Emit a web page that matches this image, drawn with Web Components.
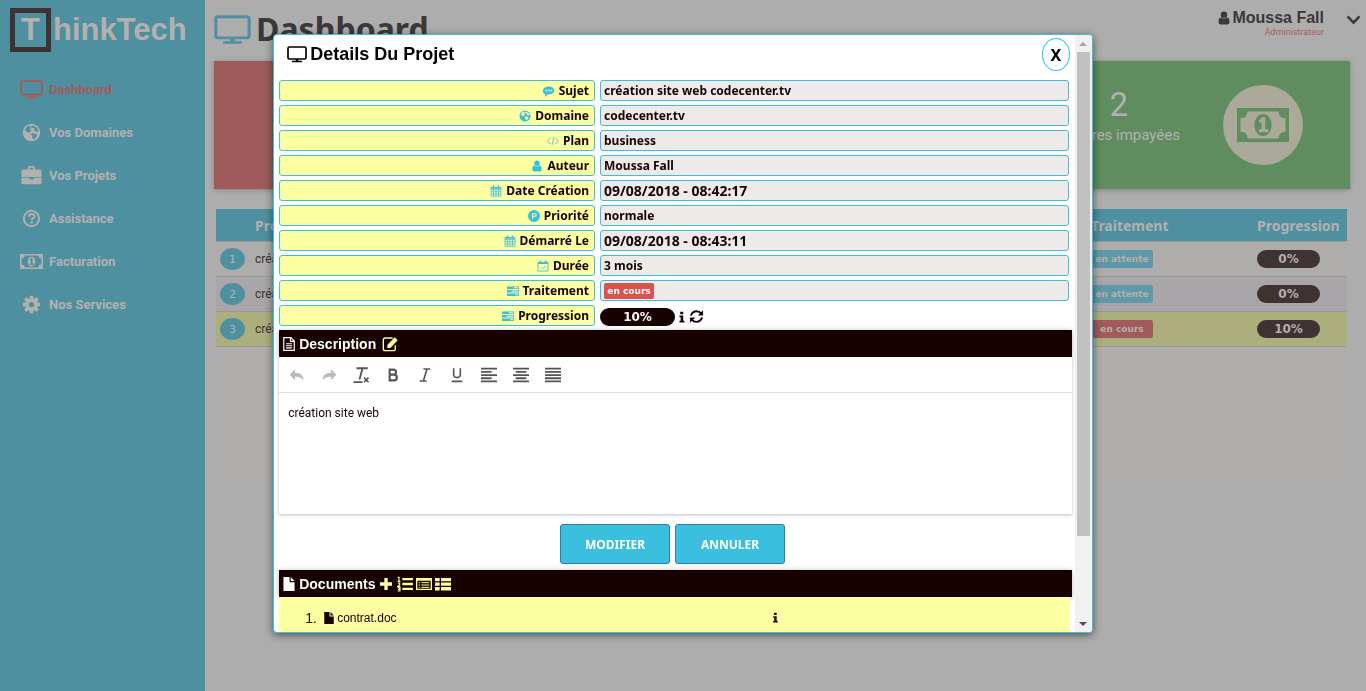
<!DOCTYPE html>
<html lang="fr">
<head>
<meta charset="utf-8">
<title>ThinkTech - Dashboard</title>
<style>
html, body { margin: 0; min-height: 100%; background: #adadad; }
body { font-family: Roboto, sans-serif; color: #180101; }
</style>
</head>
<body>
<tt-app></tt-app>
<script>
const ICONS = {
  desktop: '<rect x="1.200" y="1.200" width="21.600" height="14.800" rx="1.500" fill="none" stroke="currentColor" stroke-width="2"/><path d="M10.500 16h3v2.300h4q.8 0 .8.900t-.8.900h-11q-.8 0-.8-.900t.8-.900h4z"/>',
  globe: '<path fill-rule="evenodd" d="M12 1a11 11 0 1 0 0 22a11 11 0 0 0 0-22zM14 3l5 3 2 4-3 1-3-2 1-2-2-1-2 1-1-2zM6 5l3-2 2 2-1 3 2 1-3 3-2 0-2-2-1-2zM13 13l5 1 1 2-4 5-2-2 0-3-2-2z"/>',
  briefcase: '<path fill-rule="evenodd" d="M8 5V3q0-2 2-2h4q2 0 2 2v2h5q2 0 2 2v6H1V7q0-2 2-2zM10 3v2h4V3zM1 14h8.500v1.500h5V14H23V19q0 2-2 2H3q-2 0-2-2z"/>',
  help: '<circle cx="12" cy="12" r="9.700" fill="none" stroke="currentColor" stroke-width="2.400"/><path d="M8.500 9.500q.5-3.300 3.700-3.300 3.500 0 3.500 3 0 1.700-1.800 2.600-1.700.8-1.700 2" fill="none" stroke="currentColor" stroke-width="2.600"/><path d="M10.800 15.500h2.800v2.700h-2.800z"/>',
  money: '<path fill-rule="evenodd" d="M0 0H30V20H0zM2 2V18H28V2zM6 3H24Q24 6 27 6V14Q24 14 24 17H6Q6 14 3 14V6Q6 6 6 3zM15 4C8.500 4 8.500 16 15 16S21.500 4 15 4z"/><path d="M12.500 8l2-2h1.800V12.500H18V14H12.500V12.500h1.700V8.500l-1 .6z"/>',
  moneyInverse: '<path fill-rule="evenodd" d="M0 0H30V20H0zM6 2Q6 6 2 6V14Q6 14 6 18H24Q24 14 28 14V6Q24 6 24 2z"/><ellipse cx="15" cy="10" rx="5" ry="6.500"/><path style="fill:var(--hole)" d="M12.500 7.500l2-2h1.800V12.500H18V14.200H12.500V12.500h1.700V8.200l-1 .8z"/>',
  cog: '<circle cx="12" cy="12" r="5.800" fill="none" stroke="currentColor" stroke-width="5"/><path fill="none" stroke="currentColor" stroke-width="4.500" d="M12 1v4M12 19v4M1 12h4M19 12h4M4.200 4.200l3 3M16.800 16.800l3 3M4.200 19.800l3-3M16.800 7.200l3-3"/>',
  user: '<path d="M12 1a5.500 5.500 0 1 0 0 11a5.500 5.500 0 0 0 0-11zM7.200 11q-4.700 0-4.700 8 0 4 3.700 4h11.600q3.700 0 3.700-4 0-8-4.700-8-4.800 4-9.600 0z"/>',
  chevron: '<path d="M2.500 7l9.500 10 9.500-10" fill="none" stroke="currentColor" stroke-width="4"/>',
  comment: '<path fill-rule="evenodd" d="M12 3C-3 3-3 16 5 18.500q0 2.500-2.500 4.500 4.500-.5 7-4C26 20 27 3 12 3zM5.500 9.500h3v3h-3zM10.500 9.500h3v3h-3zM15.500 9.500h3v3h-3z"/>',
  code: '<path fill="none" stroke="currentColor" stroke-width="1.700" d="M7 6l-6 6 6 6M17 6l6 6-6 6M14 4l-4 16"/>',
  calendar: '<path fill="none" stroke="currentColor" stroke-width="1.500" d="M2 5h20v17.500H2zM2 9h20M2 13.500h20M2 18h20M7 9v13M12 9v13M17 9v13"/><path d="M2 4.500h20v3H2zM5.500 1h3v6h-3zM15.500 1h3v6h-3z"/>',
  calcheck: '<path fill="none" stroke="currentColor" stroke-width="1.700" d="M2 5h20v17H2zM8 15l3 3 6-6"/><path d="M2 4h20v4H2zM5.500 1h3v6h-3zM15.500 1h3v6h-3z"/>',
  parking: '<path fill-rule="evenodd" d="M12 0a12 12 0 1 0 0 24a12 12 0 0 0 0-24zM8 6h5.500q4 0 4 3.800t-4 3.800h-3V18H8zM10.500 8.200v3.200h3q1.500 0 1.500-1.600t-1.500-1.600z"/>',
  tasks: '<path fill-rule="evenodd" d="M0 3h24v5H0zM14 4.500v2h8v-2zM0 10h24v5H0zM9 11.500v2h13v-2zM0 17h24v5H0zM17 18.500v2h5v-2z"/>',
  info: '<path d="M8.500 1.500h6v5h-6zM7 9h7.500v10.500H17V23H7v-3.500h2.300v-7H7z"/>',
  refresh: '<path fill="none" stroke="currentColor" stroke-width="3" d="M3 10.500Q5.500 3.500 12 3.500q4.500 0 7.500 3.500M21 13.500q-2.500 7-9 7-4.500 0-7.500-3.500"/><path d="M22.500 2v8.500H14zM1.500 22v-8.500H10z"/>',
  filetext: '<path fill="none" stroke="currentColor" stroke-width="2" d="M3 1h12l6 6v16H3zM14.500 1v6.500H21M7 11.500h10M7 15h10M7 18.500h10"/>',
  file: '<path d="M2.500 0h10.500v9h8.500v15H2.500zM15 0l6.500 7H15z"/>',
  edit: '<path fill="none" stroke="currentColor" stroke-width="2" d="M16 3H5Q2 3 2 6v13q0 3 3 3h12q3 0 3-3v-5"/><path d="M8 13.500L19 2l4.500 4.500L12.500 18H8z"/>',
  undo: '<path d="M9 3v5.500q13 0 13 12.500-3.500-6.500-13-6.500V20L1 11.500z"/>',
  redo: '<path d="M15 3v5.500Q2 8.500 2 21q3.500-6.500 13-6.500V20l8-8.500z"/>',
  clear: '<path fill="none" stroke="currentColor" stroke-width="2.400" d="M6 3h15M14 3l-4 15M2 21.500h12"/><path fill="none" stroke="currentColor" stroke-width="2" d="M16 15.500l6 6M22 15.500l-6 6"/>',
  bold: '<path fill="none" stroke="currentColor" stroke-width="3.200" d="M7 4h5.500q4 0 4 3.700t-4 3.700H7h6.500q4.300 0 4.300 4.300t-4.300 4.300H7z"/>',
  italic: '<path fill="none" stroke="currentColor" stroke-width="2.400" d="M9.500 3H20M4 21h10.500M15 3L9.500 21"/>',
  underline: '<path fill="none" stroke="currentColor" stroke-width="2.400" d="M7 2v9q0 5 5 5t5-5V2M4 21.500h16"/>',
  left: '<path d="M0 1h24v2.700H0zM0 5.900h16v2.700H0zM0 10.700h24v2.700H0zM0 15.500h16v2.700H0zM0 20.300h24V23H0z"/>',
  center: '<path d="M0 1h24v2.700H0zM4 5.900h16v2.700H4zM0 10.700h24v2.700H0zM4 15.500h16v2.700H4zM0 20.300h24V23H0z"/>',
  justify: '<path d="M0 1h24v2.700H0zM0 5.900h24v2.700H0zM0 10.700h24v2.700H0zM0 15.500h24v2.700H0zM0 20.300h24V23H0z"/>',
  plus: '<path d="M9.500 3h5v6.500H21v5h-6.500V21h-5v-6.500H3v-5h6.500z"/>',
  listol: '<path d="M8 3h16v3.500H8zM8 10.300h16v3.500H8zM8 17.600h16v3.500H8z"/><path fill="none" stroke="currentColor" stroke-width="1.700" d="M1 2h2v6M1 8h4M1 10.500h3v2.500L1 15.500h4M1 17.500h3.500v5H1M1.500 20H4"/>',
  listalt: '<path fill="none" stroke="currentColor" stroke-width="2" d="M1 4h22v16H1z"/><path fill="none" stroke="currentColor" stroke-width="1.500" d="M4 10h2M8 10h12M4 13.500h2M8 13.500h12M4 17h2M8 17h12"/><path d="M1 3h22v4H1z"/>',
  thlist: '<path d="M0 3h7v5H0zM9 3h15v5H9zM0 9.800h7v5H0zM9 9.800h15v5H9zM0 16.600h7v5H0zM9 16.600h15v5H9z"/>'
};
const BOXES = { desktop: '0 0 24 21', money: '0 0 30 20', moneyInverse: '0 0 30 20' };

function define(name, render) {
  customElements.define(name, class extends HTMLElement {
    connectedCallback() {
      if (this.shadowRoot) return;
      this.attachShadow({ mode: 'open' }).innerHTML = render(this);
    }
  });
}

define('tt-icon', el => {
  const n = el.getAttribute('name');
  return `<style>:host{display:inline-block;flex:none;width:var(--w,12px);height:var(--h,12px)}svg{display:block;width:100%;height:100%;fill:currentColor}</style>
  <svg viewBox="${BOXES[n] || '0 0 24 24'}" preserveAspectRatio="${BOXES[n] ? 'none' : 'xMidYMid'}" aria-hidden="true">${ICONS[n]}</svg>`;
});

define('tt-nav-item', el => `<style>
  :host{display:block}
  a{display:flex;align-items:center;gap:6px;height:43px;padding-left:20px;color:#b3b0b0;text-decoration:none;font:bold 13px Roboto,sans-serif}
  :host([active]) a{color:#a25a5a}
  span{width:23px;display:flex;justify-content:center}
  tt-icon{--w:19px;--h:19px;--hole:#4f90a0}
  tt-icon[name=desktop]{--w:23px;--h:19px}
  tt-icon[name=moneyInverse]{--w:23px;--h:15px}
  tt-icon[name=briefcase]{--w:23px;--h:22px}
  </style><a href="#"><span><tt-icon name="${el.getAttribute('icon')}"></tt-icon></span><slot></slot></a>`);

define('tt-sidebar', () => `<style>
  :host{display:block;background:#4f90a0}
  .logo{display:flex;align-items:center;gap:2px;padding:8px 0 0 10px;margin-bottom:16px;color:#b3b0b0;text-decoration:none;font:bold 31px "Liberation Sans",Arial,sans-serif}
  .box{box-sizing:border-box;width:41px;height:44px;border:5px solid #3f3233;display:flex;align-items:center;justify-content:center}
  </style>
  <a class="logo" href="#"><span class="box">T</span><span>hinkTech</span></a>
  <nav>
    <tt-nav-item icon="desktop" active>Dashboard</tt-nav-item>
    <tt-nav-item icon="globe">Vos Domaines</tt-nav-item>
    <tt-nav-item icon="briefcase">Vos Projets</tt-nav-item>
    <tt-nav-item icon="help">Assistance</tt-nav-item>
    <tt-nav-item icon="moneyInverse">Facturation</tt-nav-item>
    <tt-nav-item icon="cog">Nos Services</tt-nav-item>
  </nav>`);

define('tt-header', () => `<style>
  :host{display:flex;justify-content:space-between;height:61px;color:#3b3838}
  h1{display:flex;align-items:flex-start;gap:5px;margin:0;padding:9px 0 0 9px;font:bold 32px/40px "Noto Sans","Open Sans",sans-serif}
  h1 tt-icon{--w:37px;--h:30px;color:#4f90a0;margin-top:6px}
  .user{display:flex;align-items:flex-start;gap:22px;padding:9px 5px 0 0}
  .name{display:flex;align-items:center;gap:1px;font:bold 16px/18px "Liberation Sans",Arial,sans-serif}
  .name tt-icon{--w:14px;--h:14px}
  .role{text-align:right;font:9px/10px Roboto,sans-serif;color:#a85f5f}
  button{border:0;background:none;padding:3px 0 0;color:inherit}
  button tt-icon{--w:15px;--h:15px}
  </style>
  <h1><tt-icon name="desktop"></tt-icon>Dashboard</h1>
  <div class="user"><div><div class="name"><tt-icon name="user"></tt-icon>Moussa Fall</div><div class="role">Administrateur</div></div>
  <button aria-label="Menu"><tt-icon name="chevron"></tt-icon></button></div>`);

define('tt-stats', () => `<style>
  :host{display:grid;grid-template-columns:1fr 1fr;margin:0 16px 0 9px;height:128px;box-shadow:0 1px 5px #6669;color:#b3b0b0}
  .red{background:#9e5b5a}
  .green{background:#5f8d60;display:flex;align-items:center;justify-content:flex-end;gap:43px;padding-right:47px}
  .text{text-align:center;font:15px/20px Roboto,sans-serif;padding-bottom:21px}
  .text b{display:block;font-weight:400;font-size:33px;line-height:40px}
  .round{width:80px;height:80px;border-radius:50%;background:#abaa9a;color:#5f8d60;display:flex;align-items:center;justify-content:center}
  .round tt-icon{--w:52px;--h:34px;--hole:#abaa9a}
  </style><div class="red"></div><div class="green"><div class="text"><b>2</b>factures impayées</div><div class="round"><tt-icon name="moneyInverse"></tt-icon></div></div>`);

define('tt-badge', () => `<style>
  :host{display:inline-flex;align-items:center;justify-content:center;box-sizing:border-box;height:var(--h,18px);width:var(--w,62px);border-radius:2px;color:var(--fg,#b3b0b0);background:var(--bg,#5f98a8);font:bold 9px "DejaVu Sans",Verdana,sans-serif}
  :host([red]){background:var(--bg,#a25a5a)}
  :host([pill]){height:18px;width:var(--w,63px);border-radius:9px;background:var(--bg,#3f3233);font-size:12px}
  </style><slot></slot>`);

define('tt-projects', () => `<style>
  :host{display:block;margin:20px 19px 0 11px}
  .wrap{min-height:276px;background:#afadab}
  table{width:100%;border-collapse:collapse;table-layout:fixed;font:12px Roboto,sans-serif;color:#3b3030}
  th{height:32px;padding:0;text-align:left;background:#4f90a0;color:#b3b0b0;font:bold 14px "Noto Sans","Open Sans",sans-serif}
  td{height:34px;padding:0}
  tr{border-bottom:1px solid #999799}
  tbody tr:nth-child(2) td{background:#a8a6a8}
  tbody tr:nth-child(3) td{background:#adae7e}
  .n{width:39px}.t{width:166px}.p{width:90px}
  i{display:flex;align-items:center;justify-content:center;width:25px;height:22px;margin-left:4px;border-radius:50%;background:#4f90a0;color:#b3b0b0;font:11px "DejaVu Sans",sans-serif}
  </style>
  <div class="wrap"><table>
  <thead><tr><th class="n"></th><th>Projet</th><th class="t">Traitement</th><th class="p">Progression</th></tr></thead>
  <tbody>
  <tr><td><i>1</i></td><td>création</td><td><tt-badge>en attente</tt-badge></td><td><tt-badge pill>0%</tt-badge></td></tr>
  <tr><td><i>2</i></td><td>création</td><td><tt-badge>en attente</tt-badge></td><td><tt-badge pill>0%</tt-badge></td></tr>
  <tr><td><i>3</i></td><td>création</td><td><tt-badge red>en cours</tt-badge></td><td><tt-badge pill>10%</tt-badge></td></tr>
  </tbody></table></div>`);

define('tt-field', el => `<style>
  :host{display:grid;grid-template-columns:40% minmax(0,1fr);column-gap:5px;font:bold 12px/19px "Noto Sans","Open Sans",sans-serif;color:#180101}
  .l,.v{box-sizing:border-box;height:21px;border:1px solid #3bbfde;border-radius:3px;min-width:0}
  .l{display:flex;align-items:center;justify-content:flex-end;gap:4px;padding-right:5px;background:#fdffa3}
  .l tt-icon{color:#3bbfde}
  .v{display:flex;align-items:center;padding-left:3px;background:#efeaea}
  :host([date]) .v{font-size:14px}
  :host([plain]) .v{border:0;background:none;padding:2px 0 0;gap:1px}
  </style><div class="l"><tt-icon name="${el.getAttribute('icon')}"></tt-icon>${el.getAttribute('label')}</div><div class="v"><slot></slot></div>`);

define('tt-bar', () => `<style>
  :host{display:block}
  h2{display:flex;align-items:center;gap:3px;margin:0;height:27px;padding-left:3px;background:#180101;color:#fff;font:bold 14px "Liberation Sans",Arial,sans-serif;box-shadow:0 1px 6px #0004}
  </style><h2><slot></slot></h2>`);

define('tt-editor', () => `<style>
  :host{display:block;background:#fff;box-shadow:0 1px 3px #0004}
  .tools{display:flex;gap:14px;height:35px;align-items:center;padding-left:9px;border-bottom:1px solid #ddd}
  button{border:0;background:none;padding:0;color:#555;display:flex;width:18px;justify-content:center}
  button:disabled{color:#bbb}
  tt-icon{--w:16px;--h:16px}
  .t tt-icon{--w:18px;--h:18px}
  .body{min-height:101px;padding:10px 9px;font:12px/20px Roboto,sans-serif;color:#180101;outline:0}
  </style>
  <div class="tools">
  <button disabled aria-label="Annuler"><tt-icon name="undo"></tt-icon></button><button disabled aria-label="Rétablir"><tt-icon name="redo"></tt-icon></button>
  <button class="t" aria-label="Effacer le format"><tt-icon name="clear"></tt-icon></button><button aria-label="Gras"><tt-icon name="bold"></tt-icon></button><button aria-label="Italique"><tt-icon name="italic"></tt-icon></button><button aria-label="Souligné"><tt-icon name="underline"></tt-icon></button>
  <button aria-label="Gauche"><tt-icon name="left"></tt-icon></button><button aria-label="Centre"><tt-icon name="center"></tt-icon></button><button aria-label="Justifié"><tt-icon name="justify"></tt-icon></button></div>
  <div class="body" contenteditable="true" role="textbox" aria-label="Description">création site web</div>`);

define('tt-scrollbar', () => `<style>
  :host{display:flex;flex-direction:column;flex:none;width:17px;background:#f1f1f1}
  .a{height:17px;display:flex;align-items:center;justify-content:center}
  .a::before{content:"";border:4px solid transparent;border-top-width:0;border-bottom-color:#a3a3a3}
  .d::before{border-width:4px 4px 0;border-color:#505050 transparent}
  .track{flex:1}
  .thumb{height:86%;margin:0 2px;background:#c1c1c1}
  </style><div class="a"></div><div class="track"><div class="thumb"></div></div><div class="a d"></div>`);

define('tt-modal', () => `<style>
  :host{position:fixed;top:34px;bottom:58px;left:20%;width:60%;display:flex;box-sizing:border-box;border:1px solid #3bbfde;border-radius:4px;background:#fff;overflow:hidden;color:#180101;box-shadow:0 2px 8px #0008}
  .content{flex:1;min-width:0;overflow:hidden;padding:0 3px 0 5px}
  header{display:flex;align-items:flex-start;justify-content:space-between;height:45px;padding:0 2px 0 8px}
  h2{display:flex;align-items:center;gap:3px;margin:0;font:bold 18px/38px "Liberation Sans",Arial,sans-serif;color:#000}
  h2 tt-icon{--w:20px;--h:17px}
  .x{margin-top:3px;width:28px;height:33px;padding:0;border:1px solid #23c8f0;border-radius:50%;background:#fff;color:#000;font:bold 16px "Noto Sans","Open Sans",sans-serif}
  .fields{display:flex;flex-direction:column;gap:4px;padding-right:3px;margin-bottom:4px}
  tt-badge{--fg:#fff}
  .cours{--bg:#d9534f;--w:50px;--h:16px}
  .pc{--bg:#180101;--w:75px}
  .fields .i{--w:12px;--h:14px}
  .r{--w:15px;--h:15px}
  .bi{--w:14px;--h:14px}
  .y{color:#fdffa3;--w:16px;--h:16px}
  .edit{margin-left:3px}
  .actions{display:flex;justify-content:center;gap:5px;padding:10px 6px 6px 0}
  .actions button{width:110px;height:40px;border:1px solid #337ab7;border-radius:3px;background:#3bbfde;color:#fff;font:bold 12px "Noto Sans","Open Sans",sans-serif}
  ol{display:block;margin:0 2px 0 0;padding:0;list-style:none;background:#fdffa3}
  li{display:grid;grid-template-columns:18px 14px 433px 1fr;align-items:center;height:41px;padding-left:26px;font:12px "Liberation Sans",Arial,sans-serif}
  .num{font-size:14px}
  li tt-icon{--w:12px;--h:12px}
  li tt-icon.inf{--w:11px;--h:11px}
  </style>
  <div class="content">
  <header><h2><tt-icon name="desktop"></tt-icon>Details Du Projet</h2><button class="x" aria-label="Fermer">X</button></header>
  <div class="fields">
  <tt-field icon="comment" label="Sujet">création site web codecenter.tv</tt-field>
  <tt-field icon="globe" label="Domaine">codecenter.tv</tt-field>
  <tt-field icon="code" label="Plan">business</tt-field>
  <tt-field icon="user" label="Auteur">Moussa Fall</tt-field>
  <tt-field icon="calendar" label="Date Création" date>09/08/2018 - 08:42:17</tt-field>
  <tt-field icon="parking" label="Priorité">normale</tt-field>
  <tt-field icon="calendar" label="Démarré Le" date>09/08/2018 - 08:43:11</tt-field>
  <tt-field icon="calcheck" label="Durée">3 mois</tt-field>
  <tt-field icon="tasks" label="Traitement"><tt-badge class="cours" red>en cours</tt-badge></tt-field>
  <tt-field icon="tasks" label="Progression" plain><tt-badge class="pc" pill>10%</tt-badge><tt-icon class="i" name="info"></tt-icon><tt-icon class="r" name="refresh"></tt-icon></tt-field>
  </div>
  <tt-bar><tt-icon class="bi" name="filetext"></tt-icon>Description<tt-icon class="y edit" name="edit"></tt-icon></tt-bar>
  <tt-editor></tt-editor>
  <div class="actions"><button>MODIFIER</button><button>ANNULER</button></div>
  <tt-bar><tt-icon class="bi" name="file"></tt-icon>Documents<tt-icon class="y" name="plus"></tt-icon><tt-icon class="y" name="listol"></tt-icon><tt-icon class="y" name="listalt"></tt-icon><tt-icon class="y" name="thlist"></tt-icon></tt-bar>
  <ol><li><span class="num">1.</span><tt-icon name="file"></tt-icon><span>contrat.doc</span><tt-icon class="inf" name="info"></tt-icon></li></ol>
  </div>
  <tt-scrollbar></tt-scrollbar>`);

define('tt-app', () => `<style>
  :host{display:grid;grid-template-columns:205px minmax(0,1fr);min-height:100vh;background:#adadad}
  </style>
  <tt-sidebar></tt-sidebar><main><tt-header></tt-header><tt-stats></tt-stats><tt-projects></tt-projects></main><tt-modal></tt-modal>`);
</script>
</body>
</html>
